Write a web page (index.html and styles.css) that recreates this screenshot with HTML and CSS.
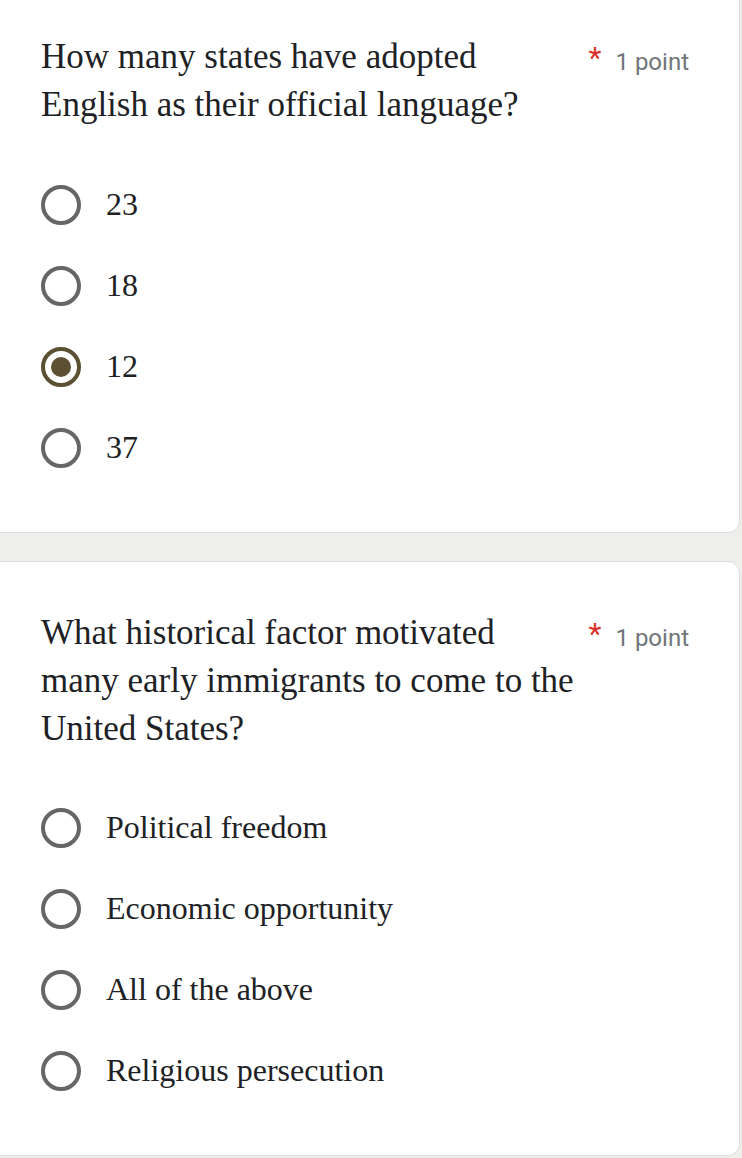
FILE: index.html
```html
<!DOCTYPE html>
<html lang="en">
<head>
    <meta charset="UTF-8">
    <meta name="viewport" content="width=device-width, initial-scale=1.0">
    <title>Quiz</title>
    <link rel="stylesheet" href="styles.css">
</head>
<body>
    <div class="form">
        <section class="card card-first">
            <div class="question-head">
                <h2 class="question-title">How many states have adopted English as their official language?</h2>
                <div class="points"><span class="required">*</span>1 point</div>
            </div>
            <div class="options">
                <label class="option"><span class="radio"></span><span class="option-text">23</span></label>
                <label class="option"><span class="radio"></span><span class="option-text">18</span></label>
                <label class="option"><span class="radio checked"></span><span class="option-text">12</span></label>
                <label class="option"><span class="radio"></span><span class="option-text">37</span></label>
            </div>
        </section>

        <section class="card">
            <div class="question-head">
                <h2 class="question-title">What historical factor motivated many early immigrants to come to the United States?</h2>
                <div class="points"><span class="required">*</span>1 point</div>
            </div>
            <div class="options">
                <label class="option"><span class="radio"></span><span class="option-text">Political freedom</span></label>
                <label class="option"><span class="radio"></span><span class="option-text">Economic opportunity</span></label>
                <label class="option"><span class="radio"></span><span class="option-text">All of the above</span></label>
                <label class="option"><span class="radio"></span><span class="option-text">Religious persecution</span></label>
            </div>
        </section>
    </div>
</body>
</html>
```

FILE: styles.css
```css
* {
    margin: 0;
    padding: 0;
    box-sizing: border-box;
}

body {
    background-color: #eeeeeb;
    color: #202124;
    font-family: 'Liberation Serif', serif;
}

.form {
    display: flex;
    flex-direction: column;
    gap: 28px;
    margin: -20px 2px 0 -12px;
}

.card {
    background-color: #ffffff;
    border: 1px solid #dadce0;
    border-radius: 12px;
    padding: 47px 50px 44px 52px;
}

.card-first {
    padding-top: 52px;
}

.question-head {
    display: flex;
    align-items: flex-start;
}

.question-title {
    flex: 1;
    font-size: 35px;
    font-weight: normal;
    line-height: 48px;
    color: #202124;
    padding-right: 6px;
}

.points {
    width: 104px;
    flex-shrink: 0;
    font-family: Roboto, 'Noto Sans', sans-serif;
    font-size: 24px;
    line-height: 48px;
    color: #70757a;
    white-space: nowrap;
    text-align: right;
    padding-top: 1px;
}

.required {
    color: #d93025;
    font-size: 30px;
    vertical-align: 2px;
    margin-right: 14px;
}

.options {
    margin-top: 35px;
}

.card:not(.card-first) .options {
    margin-top: 34px;
}

.option {
    display: flex;
    align-items: center;
    height: 81px;
    gap: 25px;
}

.radio {
    width: 40px;
    height: 40px;
    border: 4px solid #666666;
    border-radius: 50%;
    display: flex;
    align-items: center;
    justify-content: center;
    flex-shrink: 0;
}

.radio.checked {
    border-color: #5c5033;
}

.radio.checked::after {
    content: '';
    width: 20px;
    height: 20px;
    border-radius: 50%;
    background-color: #5e5032;
}

.option-text {
    font-size: 32px;
    color: #202124;
}
```
